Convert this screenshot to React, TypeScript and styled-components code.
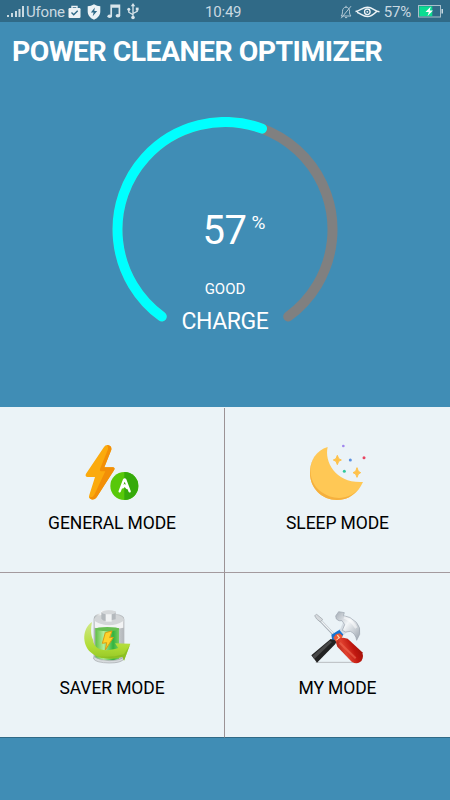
import React from "react";
import styled, { createGlobalStyle } from "styled-components";

interface ModeProps {
  label: string;
  icon: React.ReactNode;
}

const GlobalStyle = createGlobalStyle`
  * {
    box-sizing: border-box;
  }
  body {
    margin: 0;
    background-color: #408db5;
    font-family: Roboto, sans-serif;
  }
`;

// Styled components
const Screen = styled.div`
  display: flex;
  flex-direction: column;
  width: 450px;
  height: 800px;
  overflow: hidden;
  background-color: #408db5;
`;

const StatusBar = styled.div`
  display: grid;
  grid-template-columns: 205px 37px 1fr;
  align-items: center;
  height: 22px;
  padding: 0 7px 0 0;
  background-color: #306a87;
  color: #c9d9e1;
  font-size: 15px;
  line-height: 22px;
`;

const StatusGroup = styled.div<{ $end?: boolean }>`
  display: flex;
  align-items: center;
  height: 22px;
  padding-left: ${({ $end }) => ($end ? 0 : 7)}px;
  justify-content: ${({ $end }) => ($end ? "flex-end" : "flex-start")};

  svg {
    flex: none;
    display: block;
  }
`;

const StatusIcons = styled.div`
  display: flex;
  align-items: center;
  gap: 6px;
  margin-left: 3px;
`;

const StatusText = styled.span<{ $gapLeft?: number; $gapRight?: number }>`
  flex: none;
  margin-left: ${({ $gapLeft = 0 }) => $gapLeft}px;
  margin-right: ${({ $gapRight = 0 }) => $gapRight}px;
  padding-top: 1px;
  white-space: nowrap;
  letter-spacing: -0.2px;
`;

const Title = styled.h1`
  margin: 0;
  height: 58px;
  padding: 12px 0 0 12px;
  color: #fff;
  font-size: 28.4px;
  font-weight: 700;
  line-height: 35px;
  letter-spacing: -0.53px;
  white-space: nowrap;
`;

const GaugeArea = styled.div`
  display: flex;
  justify-content: center;
  height: 327px;
  padding-top: 37px;
`;

const Gauge = styled.div`
  position: relative;
  display: flex;
  flex-direction: column;
  align-items: center;
  width: 226px;
  height: 226px;
  color: #fff;
`;

const GaugeArc = styled.svg`
  position: absolute;
  inset: 0;
`;

const Reading = styled.div`
  display: flex;
  align-items: flex-start;
  margin-top: 90px;
  padding-left: 18px;
  height: 48px;
`;

const Percent = styled.span`
  font-size: 40px;
  line-height: 48px;
  letter-spacing: -0.5px;
`;

const Unit = styled.span`
  margin: 5px 0 0 5px;
  font-size: 19px;
  line-height: 22px;
`;

const Health = styled.div`
  margin-top: 25px;
  font-size: 15px;
  line-height: 18px;
`;

const Caption = styled.div`
  margin-top: 11px;
  font-size: 23px;
  line-height: 26px;
  letter-spacing: -0.4px;
`;

const ModeGrid = styled.div`
  display: grid;
  grid-template-columns: 225px 225px;
  grid-template-rows: 165px 165px;
  height: 331px;
  padding-top: 1px;
  background-color: #ebf3f7;
`;

const ModeTile = styled.div`
  display: flex;
  flex-direction: column;
  align-items: center;
  padding-top: 27px;
  border-bottom: 1px solid #a39a9e;

  &:nth-child(odd) {
    border-right: 1px solid #9b9295;
  }
  &:nth-child(n + 3) {
    border-bottom-color: #306a87;
  }
`;

const ModeLabel = styled.div`
  margin-top: 3px;
  color: #000;
  font-size: 17.5px;
  line-height: 20px;
  letter-spacing: -0.1px;
`;

const CHARGE = 57;
const ARC_PATH = "M161.8 316.5A107.5 107.5 0 1 1 288.2 316.5";

const SignalIcon = () => (
  <svg width="17" height="12" viewBox="0 0 17 12" fill="#c9d9e1">
    <rect x="0" y="9" width="2" height="2" />
    <rect x="4" y="7" width="2" height="4" />
    <rect x="8" y="5" width="2" height="6" />
    <rect x="11.5" y="3" width="2" height="8" />
    <rect x="15" y="0" width="2" height="11" />
  </svg>
);

const BagIcon = () => (
  <svg width="13" height="14" viewBox="0 0 13 14">
    <path d="M4 4V1.5H9V4" fill="none" stroke="#edf3f6" strokeWidth="1.4" />
    <rect x="0.5" y="3" width="12" height="10" rx="1.2" fill="#edf3f6" />
    <path d="M3.5 7.6L5.7 9.8L9.7 5.8" fill="none" stroke="#306a87" strokeWidth="1.4" />
  </svg>
);

const ShieldIcon = () => (
  <svg width="14" height="16" viewBox="0 0 14 16">
    <path d="M7 0.3C9 1.6 11 2.1 13.3 2.3V7.5C13.3 11.6 10.4 14.3 7 15.7C3.6 14.3 0.7 11.6 0.7 7.5V2.3C3 2.1 5 1.6 7 0.3Z" fill="#edf3f6" />
    <path d="M7.8 3.6L3.9 8.5H6.6L5.7 12.2L10.2 7H7.3Z" fill="#306a87" />
  </svg>
);

const MusicIcon = () => (
  <svg width="14" height="15" viewBox="0 0 14 15">
    <path d="M4.2 12.3V1.4H12.4V11.7M4.2 3H12.4" fill="none" stroke="#d9e5eb" strokeWidth="1.7" />
    <ellipse cx="2.7" cy="12.3" rx="2.3" ry="1.8" fill="#d9e5eb" />
    <ellipse cx="10.9" cy="11.7" rx="2.3" ry="1.8" fill="#d9e5eb" />
  </svg>
);

const UsbIcon = () => (
  <svg width="12" height="17" viewBox="0 0 12 17">
    <path d="M6 2V14M6 11.7L1.8 9.2V6M6 10.5L10.2 8.3V5.5" fill="none" stroke="#d9e5eb" strokeWidth="1.3" />
    <path d="M6 0L8.2 3.3H3.8Z" fill="#d9e5eb" />
    <circle cx="6" cy="14.5" r="1.8" fill="#d9e5eb" />
    <circle cx="1.8" cy="6.2" r="1.5" fill="#d9e5eb" />
    <rect x="8.8" y="4.6" width="2.8" height="2.8" fill="#d9e5eb" />
  </svg>
);

const MutedBellIcon = () => (
  <svg width="12" height="14" viewBox="0 0 12 14" fill="none" stroke="#b4cad6" strokeWidth="1">
    <path d="M1 11H11C9.8 9.8 9.5 8.8 9.5 6.3C9.5 3.8 8 2.2 6 2.2C4 2.2 2.5 3.8 2.5 6.3C2.5 8.8 2.2 9.8 1 11ZM5 12.6H7.2M6 0.8V2.2M11 1.2L1.2 13.2" />
  </svg>
);

const EyeIcon = () => (
  <svg width="31" height="12" viewBox="-3 0 31 12" fill="none" stroke="#edf3f6" strokeWidth="1.5">
    <path d="M0.5 5.5C5 5 7.5 1.2 12.5 1.2C17.5 1.2 20 5.4 24.5 5.7M2 6.2C6.5 8 8 10.6 12.5 10.6C16.5 10.6 18.5 8.4 21.5 5.6" />
    <circle cx="12.3" cy="5.8" r="2.8" strokeWidth="1.3" />
    <circle cx="12.3" cy="5.8" r="0.9" fill="#edf3f6" stroke="none" />
  </svg>
);

const BatteryIcon = () => (
  <svg width="25" height="13" viewBox="0 0 25 13">
    <rect x="0.5" y="0.5" width="22" height="11.5" fill="none" stroke="#a9c0cc" />
    <rect x="1.3" y="1.3" width="13" height="9.9" fill="#0bdc92" />
    <rect x="23.5" y="4" width="1.5" height="4.5" fill="#c9d9e1" />
    <path d="M12.8 1.5L7.5 7H10.8L9.6 11L15 5.6H11.8Z" fill="#fff" />
  </svg>
);

const GeneralIcon = () => (
  <svg width="75" height="75" viewBox="0 0 225 225">
    <path d="M87 36Q91 29 99 30Q111 33 109 44L88 97H113Q122 98 117 106L65 187Q58 196 49 193Q39 190 43 180L60 126H38Q29 125 33 116Z" fill="#fbaa0d" />
    <path d="M109 44L88 97H113Q122 98 117 106L65 187Q58 196 49 193Q45 191 43 186Q53 189 58 179L91 109H78Q73 108 75 102L99 43Q101 36 96 30Q111 31 109 44Z" fill="#f28f08" />
    <circle cx="148" cy="153" r="42" fill="#58c80a" />
    <path d="M148 111A42 42 0 0 1 148 195Z" fill="#35aa0b" />
    <path d="M134 169L147 135Q149 132 151 135L164 169M143 157L149 151L156 159" fill="none" stroke="#fff" strokeWidth="7" strokeLinecap="round" strokeLinejoin="round" />
  </svg>
);

const SleepIcon = () => (
  <svg width="75" height="75" viewBox="0 0 225 225">
    <path d="M83 36C72 83 110 146 189 141C174 176 145 195 111 195C66 195 30 160 30 114C30 77 49 46 83 36Z" fill="#ffc855" />
    <path d="M58 49C20 82 25 144 64 171C103 199 151 193 178 159C157 185 139 195 111 195C66 195 30 160 30 114C30 86 40 64 58 49Z" fill="#f5b03e" />
    <path d="M112 61L116 71L124 75L116 79L112 89L108 79L100 75L108 71ZM171 98L175 109L182 113L175 117L171 127L167 117L159 113L167 109Z" fill="#ffc24a" stroke="#ffc24a" strokeWidth="3" />
    <circle cx="130" cy="33" r="4" fill="#a187ee" />
    <circle cx="151" cy="75" r="4.5" fill="#5b91e1" />
    <circle cx="192" cy="68" r="4.5" fill="#e84562" />
    <circle cx="133" cy="109" r="4.5" fill="#31c99b" />
  </svg>
);

const SaverIcon = () => (
  <svg width="75" height="75" viewBox="0 0 225 225">
    <defs>
      <linearGradient id="glass" x1="0" x2="1">
        <stop offset="0" stopColor="#a8adb0" />
        <stop offset="0.25" stopColor="#fafafa" />
        <stop offset="0.65" stopColor="#d5d8da" />
        <stop offset="1" stopColor="#b1b5b9" />
      </linearGradient>
      <linearGradient id="charge" x1="0" x2="1">
        <stop offset="0" stopColor="#5fbf45" />
        <stop offset="0.35" stopColor="#b2ed99" />
        <stop offset="0.75" stopColor="#32b33d" />
        <stop offset="1" stopColor="#79cc60" />
      </linearGradient>
      <linearGradient id="swoosh" x1="0" x2="0" y1="0" y2="1">
        <stop offset="0" stopColor="#d1e989" />
        <stop offset="0.65" stopColor="#b0dc34" />
        <stop offset="1" stopColor="#92c425" />
      </linearGradient>
    </defs>
    <path d="M56 57Q56 43 78 40V34Q99 27 122 34V41Q148 44 148 58V176Q143 188 103 189Q61 188 56 176Z" fill="url(#glass)" />
    <ellipse cx="102" cy="59" rx="45" ry="17" fill="#d3d6d8" />
    <path d="M79 37V56Q85 65 99 62L122 58V37" fill="#b4b9bd" />
    <path d="M92 41V65H110V41" fill="#f1f3f4" />
    <ellipse cx="101" cy="37" rx="22" ry="6" fill="#d5d8da" />
    <path d="M59 63Q103 89 145 63V83Q104 92 59 83Z" fill="#f2f3f4" />
    <path d="M61 84Q98 93 132 84V177Q98 187 61 175Z" fill="url(#charge)" />
    <ellipse cx="97" cy="87" rx="36" ry="6" fill="#68bf52" />
    <path d="M57 170Q74 182 103 182Q139 181 147 170V176Q140 189 103 189Q63 188 56 177Z" fill="#d7dbde" stroke="#a4a9ae" strokeWidth="2" />
    <path d="M51 66C22 85 20 132 47 157C71 180 110 180 143 170L147 182L166 131L120 130L130 144C90 157 57 151 54 119C47 105 47 85 51 66Z" fill="url(#swoosh)" />
    <path d="M64 168Q101 179 143 170L147 182L165 134L147 163Q103 175 64 168Z" fill="#83b81d" opacity="0.65" />
    <path d="M91 98L111 93L104 113L115 112L91 150L95 128L82 130Z" fill="#ffd22b" stroke="#d99f13" strokeWidth="3" />
  </svg>
);

const ToolsIcon = () => (
  <svg width="75" height="75" viewBox="0 0 225 225">
    <defs>
      <linearGradient id="steel" x1="0" x2="1" y1="0" y2="1">
        <stop offset="0" stopColor="#a5adb6" />
        <stop offset="0.45" stopColor="#f3f6f8" />
        <stop offset="1" stopColor="#98a2ac" />
      </linearGradient>
      <linearGradient id="redGrip" x1="0" x2="1" y1="0.7" y2="0.3">
        <stop offset="0" stopColor="#8f1009" />
        <stop offset="0.35" stopColor="#e0402e" />
        <stop offset="0.65" stopColor="#bf170f" />
        <stop offset="1" stopColor="#981007" />
      </linearGradient>
    </defs>
    <path d="M47 187H160" stroke="#b8bcc0" strokeWidth="3" />
    <path d="M55 55L109 112" stroke="#a5adb5" strokeWidth="8" />
    <path d="M54 53L109 110" stroke="#eff2f4" strokeWidth="4" />
    <path d="M44 47L50 43L68 58L61 66L50 57Z" fill="#d5d9dd" stroke="#9aa1a8" strokeWidth="2" />
    <path d="M94 104L121 88L134 98L118 122L97 123Z" fill="#1773d0" />
    <path d="M119 91L130 66L155 84L131 105Z" fill="#d5dce3" />
    <path d="M107 48L116 35L133 38L130 47Q150 48 169 67Q183 82 179 103L170 121Q167 101 151 94L137 96L127 91L134 74L126 62Q117 65 109 57Z" fill="url(#steel)" stroke="#9aa3ad" strokeWidth="2" />
    <path d="M132 52Q156 62 169 84" fill="none" stroke="#fff" strokeWidth="8" opacity="0.5" />
    <path d="M92 117L111 122L106 132L51 188L34 166Z" fill="#222" />
    <path d="M89 122L37 168L43 177L96 126Z" fill="#494949" />
    <path d="M100 113L108 103L119 100L128 107L125 115L110 128Z" fill="#ee5a35" />
    <path d="M112 105L118 114L110 121" fill="none" stroke="#ffd5af" strokeWidth="4" />
    <path d="M108 128Q112 112 130 113L143 116L187 157Q193 179 179 187Q168 193 155 185L112 140Z" fill="url(#redGrip)" />
    <path d="M119 128L167 175" stroke="#f06a52" strokeWidth="6" opacity="0.6" />
  </svg>
);

const Mode: React.FC<ModeProps> = ({ label, icon }) => (
  <ModeTile>
    {icon}
    <ModeLabel>{label}</ModeLabel>
  </ModeTile>
);

const App: React.FC = () => {
  return (
    <Screen>
      <GlobalStyle />
      <StatusBar>
        <StatusGroup>
          <SignalIcon />
          <StatusText $gapLeft={2}>Ufone</StatusText>
          <StatusIcons>
            <BagIcon />
            <ShieldIcon />
            <MusicIcon />
            <UsbIcon />
          </StatusIcons>
        </StatusGroup>
        <StatusText>10:49</StatusText>
        <StatusGroup $end>
          <MutedBellIcon />
          <EyeIcon />
          <StatusText $gapLeft={1} $gapRight={7}>57%</StatusText>
          <BatteryIcon />
        </StatusGroup>
      </StatusBar>
      <Title>POWER CLEANER OPTIMIZER</Title>
      <GaugeArea>
        <Gauge>
          <GaugeArc width="226" height="226" viewBox="112 117 226 226" fill="none" strokeWidth="10" strokeLinecap="round">
            <path d={ARC_PATH} stroke="#808080" />
            <path d={ARC_PATH} stroke="#00ffff" pathLength={100} strokeDasharray={`${CHARGE} 200`} />
          </GaugeArc>
          <Reading>
            <Percent>{CHARGE}</Percent>
            <Unit>%</Unit>
          </Reading>
          <Health>GOOD</Health>
          <Caption>CHARGE</Caption>
        </Gauge>
      </GaugeArea>
      <ModeGrid>
        <Mode label="GENERAL MODE" icon={<GeneralIcon />} />
        <Mode label="SLEEP MODE" icon={<SleepIcon />} />
        <Mode label="SAVER MODE" icon={<SaverIcon />} />
        <Mode label="MY MODE" icon={<ToolsIcon />} />
      </ModeGrid>
    </Screen>
  );
};

export default App;
